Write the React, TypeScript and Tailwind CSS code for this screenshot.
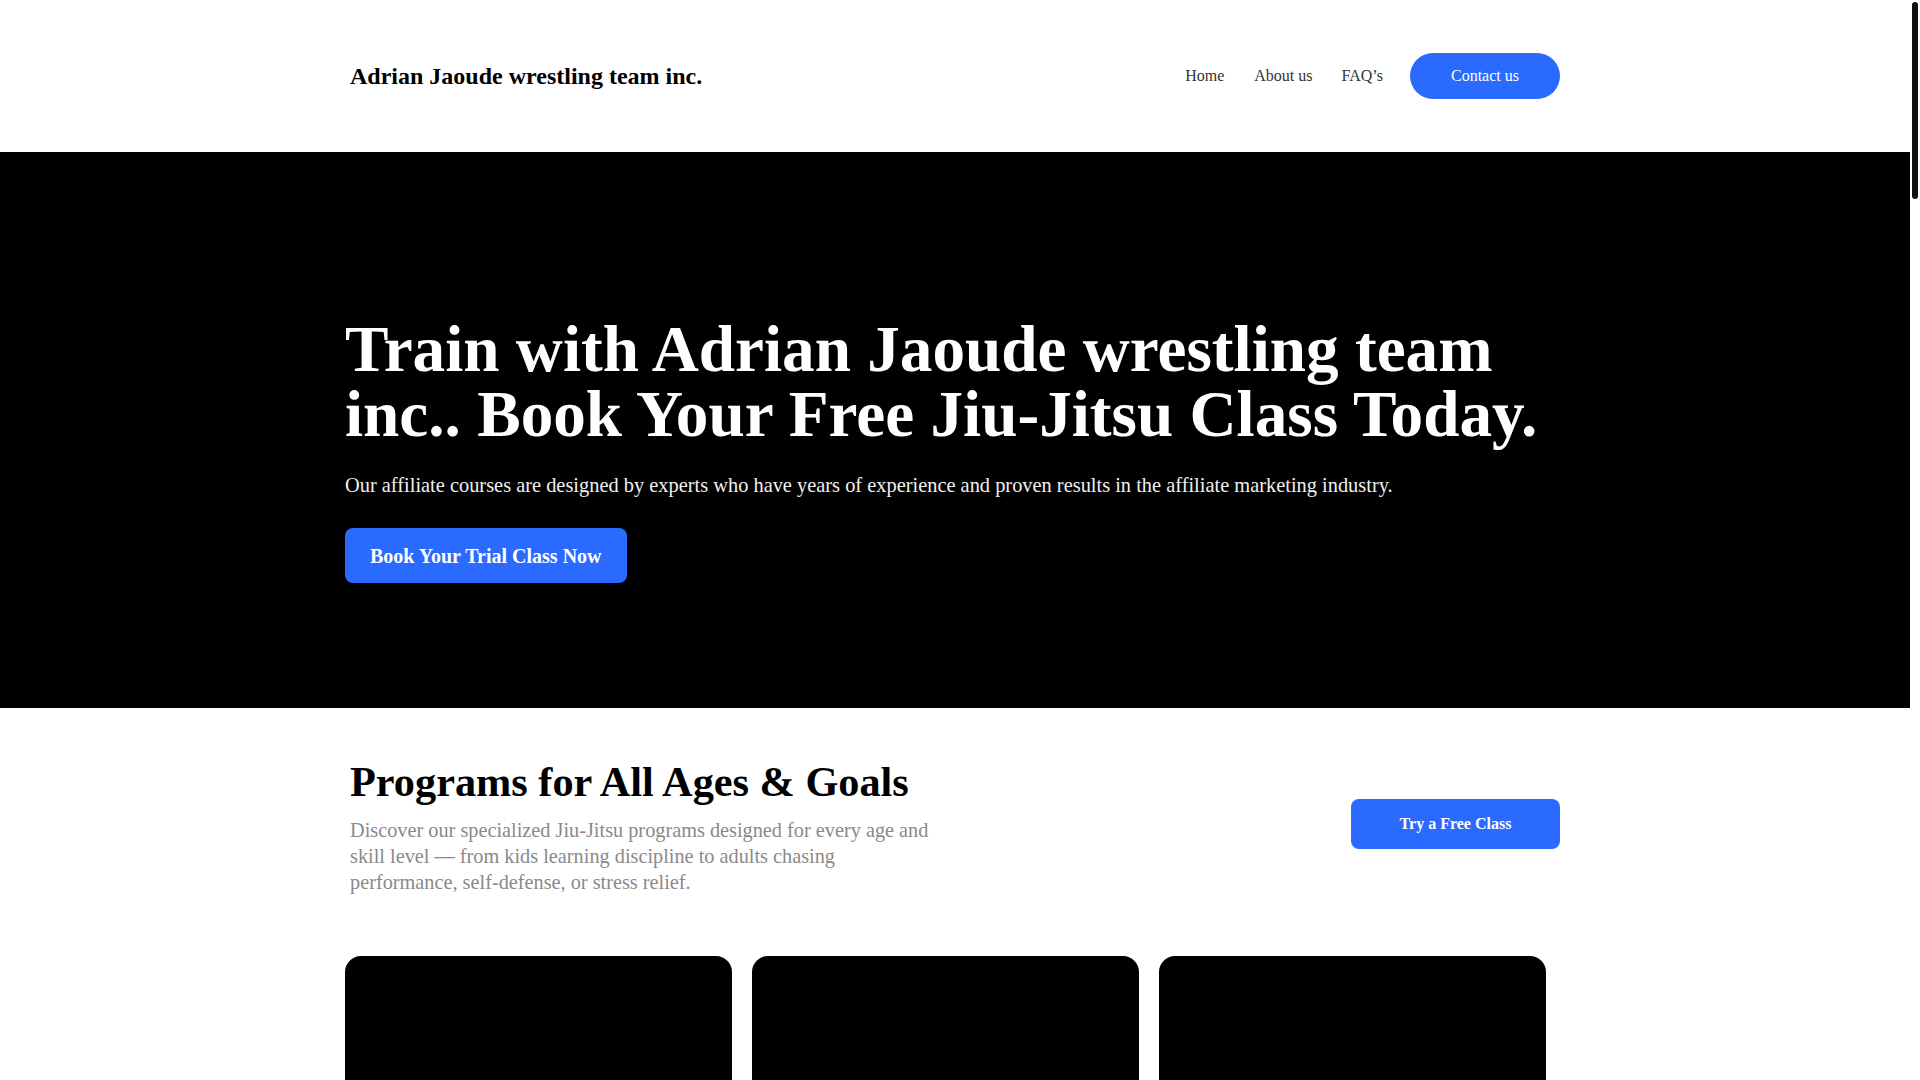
import React from "react";

const serif = { fontFamily: '"Liberation Serif", "Times New Roman", serif' };

export default function App() {
  return (
    <div className="flex bg-white" style={serif}>
      <main className="min-h-[5920px] min-w-0 flex-1">
        {/* Header */}
        <header className="h-[152px]">
          <div className="mx-auto flex h-full w-[1210px] items-center justify-between">
            <div className="text-[24px] font-bold leading-none text-black">
              Adrian Jaoude wrestling team inc.
            </div>
            <nav className="flex items-center text-[16px] text-[#333333]">
              <a href="#" className="leading-none">Home</a>
              <a href="#" className="ml-[30px] leading-none">About us</a>
              <a href="#" className="ml-[29px] leading-none">FAQ’s</a>
              <a
                href="#"
                className="ml-[27px] flex h-[46px] w-[150px] items-center justify-center rounded-full bg-[#2a6aff] text-white"
              >
                Contact us
              </a>
            </nav>
          </div>
        </header>

        {/* Hero */}
        <section className="h-[556px] bg-black">
          <div className="mx-auto w-[1210px] pt-[165px]">
            <div className="-ml-[5px]">
              <h1 className="text-[65.2px] font-bold leading-[65px] text-white">
                Train with Adrian Jaoude wrestling team inc.. Book Your Free Jiu-Jitsu Class Today.
              </h1>
              <p className="mt-[24px] text-[20.4px] leading-[28px] text-[#f0f0f0]">
                Our affiliate courses are designed by experts who have years of experience and proven results in the affiliate marketing industry.
              </p>
              <a
                href="#"
                className="mt-[29px] inline-flex h-[55px] items-center rounded-[8px] bg-[#2a6aff] px-[25px] text-[20px] font-bold text-white"
              >
                Book Your Trial Class Now
              </a>
            </div>
          </div>
        </section>

        {/* Programs */}
        <section>
          <div className="mx-auto w-[1210px] pt-[49px]">
            <div className="flex items-center justify-between">
              <div>
                <h2 className="text-[42.3px] font-bold leading-[50px] text-black">
                  Programs for All Ages &amp; Goals
                </h2>
                <p className="mt-[10px] w-[592px] text-[20.3px] leading-[26px] text-[#8a8a8a]">
                  Discover our specialized Jiu-Jitsu programs designed for every age and skill level — from kids learning discipline to adults chasing performance, self-defense, or stress relief.
                </p>
              </div>
              <a
                href="#"
                className="mb-[5px] flex h-[50px] w-[209px] items-center justify-center rounded-[8px] bg-[#2a6aff] text-[16px] font-bold text-white"
              >
                Try a Free Class
              </a>
            </div>

            <div className="-ml-[5px] mt-[61px] grid w-[1201px] grid-cols-3 gap-[20px]">
              <div className="h-[480px] rounded-[16px] bg-black" />
              <div className="h-[480px] rounded-[16px] bg-black" />
              <div className="h-[480px] rounded-[16px] bg-black" />
            </div>
          </div>
        </section>
      </main>

      {/* Scrollbar strip */}
      <aside className="sticky top-0 h-screen w-[10px] shrink-0 bg-white px-[2px] pt-[2px]">
        <div className="h-[197px] w-[6px] rounded-full bg-[#111111]" />
      </aside>
    </div>
  );
}
